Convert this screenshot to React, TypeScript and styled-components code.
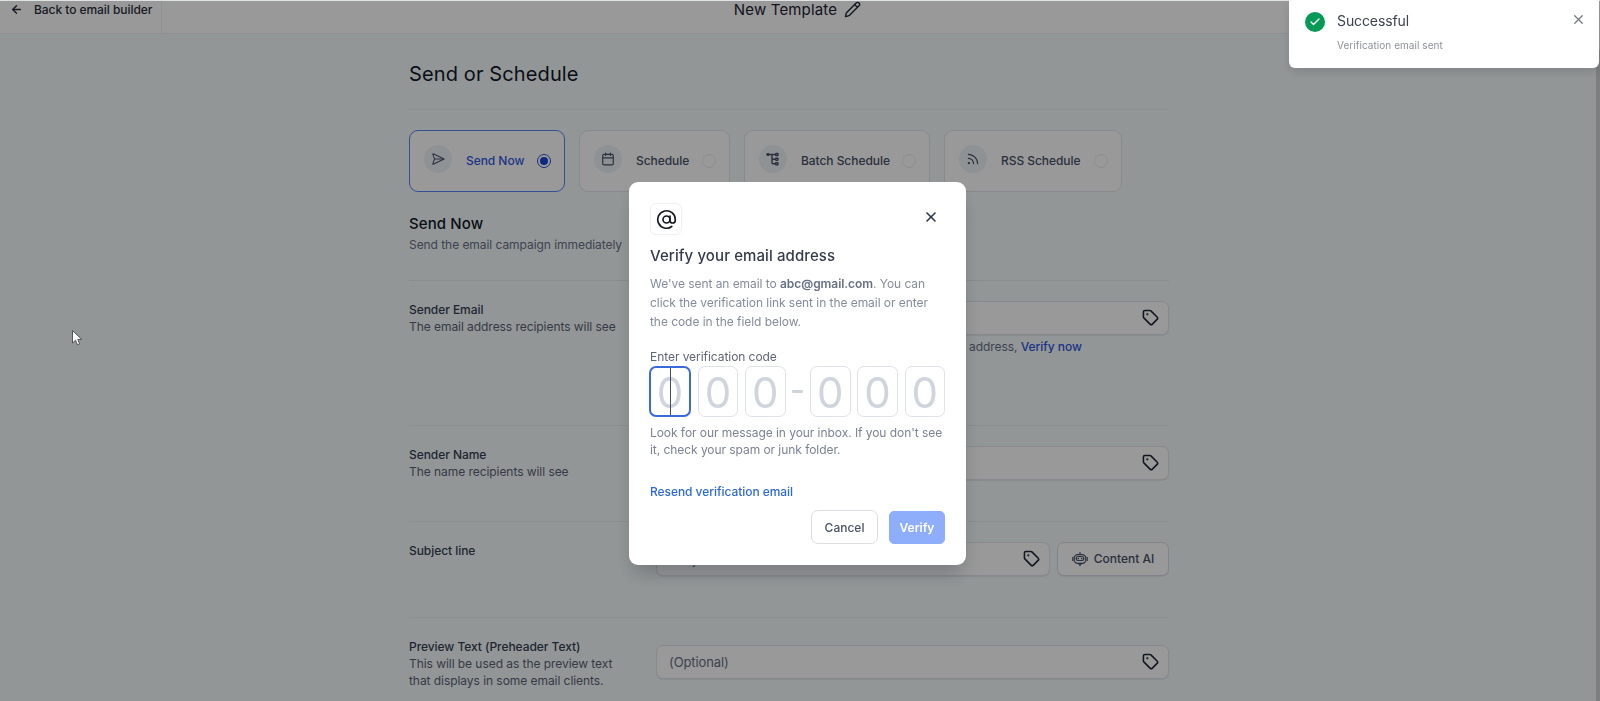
import styled, { createGlobalStyle, css } from "styled-components";
import {
  ArrowLeft,
  AtSign,
  Calendar,
  Check,
  Pencil,
  Rss,
  SendHorizontal,
  Tag,
  X,
} from "lucide-react";

const GlobalStyle = createGlobalStyle`
  * {
    box-sizing: border-box;
  }
  body {
    margin: 0;
    font-family: Inter, "Liberation Sans", sans-serif;
    font-size: 12px;
    letter-spacing: -0.055px;
    color: #344054;
    overflow: hidden;
  }
  h1, h2, h3, p {
    margin: 0;
    font-weight: 400;
  }
  button {
    font-family: inherit;
    padding: 0;
    background: none;
    border: none;
  }
`;

const Page = styled.div`
  height: 701px;
  overflow: hidden;
  background-color: #f5fbfc;
`;

const Header = styled.header`
  height: 34px;
  display: grid;
  grid-template-columns: 162px 1fr 162px;
  background-color: white;
  border-bottom: 1px solid #edeff5;
`;

const Back = styled.div`
  display: flex;
  align-items: center;
  gap: 11px;
  padding: 0 0 14px 10px;
  border-right: 1px solid #f1f2f7;
  font-weight: 500;
  white-space: nowrap;
  color: #2a303c;
`;

const TemplateName = styled.div`
  display: flex;
  align-items: center;
  justify-content: center;
  gap: 7px;
  padding: 0 5px 14px 0;
  font-size: 15px;
  letter-spacing: 0.17px;
  color: #1d2433;
`;

const Content = styled.main`
  width: 760px;
  margin-left: 409px;
`;

const Title = styled.h1`
  height: 76px;
  padding-top: 28px;
  font-size: 20px;
  line-height: 24px;
  letter-spacing: 0.12px;
  border-bottom: 1px solid #e9eef0;
  color: #101828;
`;

const Options = styled.div`
  display: flex;
  gap: 14px;
  padding-top: 20px;
`;

const Option = styled.div<{ $active?: boolean; $width: number }>`
  width: ${(props) => props.$width}px;
  height: 62px;
  display: flex;
  align-items: center;
  padding: 0 13px 2px 14px;
  background-color: white;
  border: 1px solid ${(props) => (props.$active ? "#5b83f7" : "#e2e5ea")};
  border-radius: 9px;
  color: ${(props) => (props.$active ? "#3259e4" : "#475067")};
  font-weight: 500;
`;

const OptionIcon = styled.span`
  width: 28px;
  height: 28px;
  display: flex;
  align-items: center;
  justify-content: center;
  margin-bottom: 2px;
  border-radius: 50%;
  background-color: #eff3f7;
  color: #475067;
`;

const OptionLabel = styled.span`
  padding: 1px 0 0 14px;
  white-space: nowrap;
`;

const Radio = styled.span<{ $checked?: boolean }>`
  width: 14px;
  height: 14px;
  margin: 1px 0 0 auto;
  display: flex;
  align-items: center;
  justify-content: center;
  border: 1px solid ${(props) => (props.$checked ? "#2a50d8" : "#eaecf0")};
  border-radius: 50%;
  ${(props) =>
    props.$checked &&
    css`
      &::after {
        content: "";
        width: 8px;
        height: 8px;
        border-radius: 50%;
        background-color: #1c45d4;
      }
    `}
`;

const Intro = styled.section`
  height: 89px;
  padding-top: 21px;
  border-bottom: 1px solid #e6ebed;
`;

const IntroTitle = styled.h2`
  font-size: 15px;
  font-weight: 500;
  line-height: 22px;
  letter-spacing: 0.1px;
  color: #101828;
`;

const IntroText = styled.p`
  line-height: 17px;
  margin-top: 1px;
  color: #667085;
`;

const Row = styled.section<{ $height: number }>`
  height: ${(props) => props.$height}px;
  display: grid;
  grid-template-columns: 247px 1fr;
  padding-top: 20px;
  border-bottom: 1px solid #e9edef;
`;

const RowLabel = styled.h3`
  font-size: 12px;
  line-height: 17px;
  font-weight: 500;
  color: #344054;
`;

const RowText = styled.p`
  line-height: 17px;
  white-space: nowrap;
  color: #596275;
`;

const RowFields = styled.div<{ $offset?: number }>`
  display: flex;
  gap: 7px;
  margin-top: ${(props) => props.$offset ?? 0}px;
`;

const Field = styled.div`
  flex: 1;
  height: 34px;
  display: flex;
  align-items: center;
  justify-content: space-between;
  padding: 0 9px 1px 12px;
  background-color: white;
  border: 1px solid #e1e4ea;
  border-radius: 7px;
  box-shadow: 0 1px 1px rgba(16, 24, 40, 0.08);
  font-size: 13px;
  letter-spacing: -0.1px;
  color: #667085;
  svg {
    color: #1d2433;
  }
`;

const AiButton = styled.button`
  width: 112px;
  height: 34px;
  display: flex;
  align-items: center;
  justify-content: center;
  gap: 6px;
  padding-bottom: 1px;
  background-color: white;
  border: 1px solid #dadde6;
  border-radius: 7px;
  box-shadow: 0 1px 1px rgba(16, 24, 40, 0.08);
  font-size: 12px;
  font-weight: 500;
  color: #475067;
`;

const Hint = styled.p`
  margin-top: 3px;
  padding-left: 313px;
  line-height: 17px;
  white-space: nowrap;
  color: #667085;
  a {
    color: #2f55e0;
    font-weight: 500;
  }
`;

const Overlay = styled.div`
  position: fixed;
  inset: 0;
  background-color: rgba(0, 0, 0, 0.4);
  border-top: 1px solid #dfe2e2;
`;

const Scrollbar = styled.div`
  position: fixed;
  top: 50px;
  right: 0;
  width: 4px;
  height: 651px;
  background-color: #7d7f80;
`;

const Modal = styled.div`
  position: fixed;
  top: 182px;
  left: 629px;
  width: 337px;
  height: 383px;
  padding: 21px 21px 0;
  background-color: white;
  border-radius: 9px;
  box-shadow: 0 12px 20px -4px rgba(16, 24, 40, 0.25);
`;

const ModalTop = styled.div`
  display: flex;
  justify-content: space-between;
`;

const ModalIcon = styled.div`
  width: 32px;
  height: 32px;
  display: flex;
  align-items: center;
  justify-content: center;
  border: 1px solid #eff0f3;
  border-radius: 6px;
  color: #15181f;
`;

const CloseButton = styled.button`
  width: 16px;
  height: 16px;
  margin: 6px 6px 0 0;
  color: #2b3350;
`;

const ModalTitle = styled.h2`
  margin-top: 10px;
  font-size: 15px;
  font-weight: 500;
  line-height: 22px;
  letter-spacing: 0.1px;
  color: #343a49;
`;

const ModalText = styled.p`
  margin-top: 7px;
  line-height: 19px;
  white-space: nowrap;
  color: #848b9c;
  b {
    font-weight: 600;
    color: #667085;
  }
`;

const CodeLabel = styled.p`
  margin-top: 17px;
  line-height: 17px;
  color: #5d6577;
`;

const Code = styled.div`
  display: flex;
  justify-content: space-between;
  margin: 1px 0 7px -1px;
`;

const Digit = styled.div<{ $focused?: boolean }>`
  position: relative;
  width: ${(props) => (props.$focused ? 42 : 40.5)}px;
  height: 51px;
  display: flex;
  align-items: center;
  justify-content: center;
  padding-top: 1px;
  border: 1px solid #dfe1e9;
  border-radius: 7px;
  font-size: 42px;
  line-height: 49px;
  color: #d0d5dd;
  ${(props) =>
    props.$focused &&
    css`
      border: 2px solid #3a68dd;
      &::after {
        content: "";
        position: absolute;
        top: 0;
        left: 19px;
        width: 1px;
        height: 47px;
        background-color: #454b59;
      }
    `}
`;

const Dash = styled.span`
  width: 11px;
  height: 3px;
  margin-top: 24px;
  border-radius: 1px;
  background-color: #d0d5dd;
`;

const Help = styled.p`
  line-height: 17px;
  white-space: nowrap;
  color: #7b8294;
`;

const Resend = styled.a`
  display: block;
  margin-top: 25px;
  line-height: 17px;
  font-weight: 500;
  color: #2d69d4;
`;

const Actions = styled.div`
  display: flex;
  justify-content: flex-end;
  align-items: center;
  gap: 11px;
  margin-top: 10px;
`;

const Button = styled.button<{ $primary?: boolean }>`
  width: ${(props) => (props.$primary ? 56 : 67)}px;
  height: ${(props) => (props.$primary ? 33 : 34)}px;
  border: 1px solid ${(props) => (props.$primary ? "#8eadfb" : "#dcdee4")};
  border-radius: ${(props) => (props.$primary ? 5 : 7)}px;
  background-color: ${(props) => (props.$primary ? "#8eadfb" : "white")};
  color: ${(props) => (props.$primary ? "white" : "#475067")};
  font-size: 12px;
  font-weight: ${(props) => (props.$primary ? 600 : 500)};
`;

const Toast = styled.div`
  position: fixed;
  top: 0;
  left: 1289px;
  width: 309.5px;
  height: 68px;
  display: flex;
  padding: 12px 13px 0 16px;
  background-color: white;
  border-radius: 0 0 6px 6px;
  box-shadow: 0 5px 12px rgba(0, 0, 0, 0.12);
`;

const ToastIcon = styled.span`
  width: 20px;
  height: 20px;
  display: flex;
  align-items: center;
  justify-content: center;
  border-radius: 50%;
  background-color: #079a57;
  color: white;
`;

const ToastBody = styled.div`
  flex: 1;
  padding-left: 12px;
`;

const ToastTitle = styled.p`
  font-size: 14px;
  line-height: 18px;
  letter-spacing: -0.1px;
  color: #3b414d;
`;

const ToastText = styled.p`
  margin-top: 8px;
  font-size: 10px;
  line-height: 14px;
  letter-spacing: 0.05px;
  color: #8d9199;
`;

const ToastClose = styled.span`
  height: 14px;
  color: #74777d;
`;

const Cursor = styled.svg`
  position: fixed;
  top: 329px;
  left: 71px;
`;

const BatchIcon = () => (
  <svg width="14" height="14" viewBox="0 0 14 14" fill="none" stroke="currentColor" strokeWidth="1.4">
    <path d="M3 2.5h6.5M6 2.5v8.3a1 1 0 0 0 1 1h2.5M6 7.2h3.5" />
    <rect x="1" y="1.7" width="1.8" height="1.6" rx="0.6" />
    <rect x="9.6" y="1.5" width="2.4" height="2" rx="0.6" />
    <rect x="9.6" y="6.2" width="2.4" height="2" rx="0.6" />
    <rect x="9.6" y="10.8" width="2.4" height="2" rx="0.6" />
  </svg>
);

const RobotIcon = () => (
  <svg width="16" height="16" viewBox="0 0 16 16" fill="none" stroke="currentColor" strokeWidth="1.2">
    <path d="M8 1.4v2M.8 6.4v3.2M15.2 6.4v3.2M6.6 12.4 8 14.2l1.4-1.8" strokeLinecap="round" />
    <rect x="2.2" y="3.6" width="11.6" height="8.8" rx="3.6" />
    <rect x="4.2" y="5.5" width="7.6" height="4" rx="1.9" />
    <path d="M6.4 6.8v1.4M9.6 6.8v1.4" strokeWidth="1.4" />
  </svg>
);

const options = [
  { label: "Send Now", width: 156, icon: <SendHorizontal size={14} strokeWidth={1.8} />, active: true },
  { label: "Schedule", width: 151, icon: <Calendar size={14} strokeWidth={2} /> },
  { label: "Batch Schedule", width: 186, icon: <BatchIcon /> },
  { label: "RSS Schedule", width: 178, icon: <Rss size={14} strokeWidth={2} /> },
];

const TagIcon = () => <Tag size={17} strokeWidth={2.2} />;

function App() {
  return (
    <>
      <GlobalStyle />
      <Page>
        <Header>
          <Back>
            <ArrowLeft size={13} strokeWidth={2.6} />
            Back to email builder
          </Back>
          <TemplateName>
            New Template
            <Pencil size={17} strokeWidth={1.9} />
          </TemplateName>
        </Header>
        <Content>
          <Title>Send or Schedule</Title>
          <Options>
            {options.map((option) => (
              <Option key={option.label} $active={option.active} $width={option.width}>
                <OptionIcon>{option.icon}</OptionIcon>
                <OptionLabel>{option.label}</OptionLabel>
                <Radio $checked={option.active} />
              </Option>
            ))}
          </Options>
          <Intro>
            <IntroTitle>Send Now</IntroTitle>
            <IntroText>Send the email campaign immediately</IntroText>
          </Intro>
          <Row $height={145}>
            <div>
              <RowLabel>Sender Email</RowLabel>
              <RowText>The email address recipients will see</RowText>
            </div>
            <div>
              <RowFields>
                <Field>
                  <span />
                  <TagIcon />
                </Field>
              </RowFields>
              <Hint>
                address, <a>Verify now</a>
              </Hint>
            </div>
          </Row>
          <Row $height={96}>
            <div>
              <RowLabel>Sender Name</RowLabel>
              <RowText>The name recipients will see</RowText>
            </div>
            <RowFields>
              <Field>
                <span />
                <TagIcon />
              </Field>
            </RowFields>
          </Row>
          <Row $height={96}>
            <RowLabel>Subject line</RowLabel>
            <RowFields>
              <Field>
                Subject
                <TagIcon />
              </Field>
              <AiButton>
                <RobotIcon />
                Content AI
              </AiButton>
            </RowFields>
          </Row>
          <Row $height={110}>
            <div>
              <RowLabel>Preview Text (Preheader Text)</RowLabel>
              <RowText>
                This will be used as the preview text
                <br />
                that displays in some email clients.
              </RowText>
            </div>
            <RowFields $offset={7}>
              <Field>
                (Optional)
                <TagIcon />
              </Field>
            </RowFields>
          </Row>
        </Content>
      </Page>
      <Overlay />
      <Scrollbar />
      <Modal>
        <ModalTop>
          <ModalIcon>
            <AtSign size={21} strokeWidth={1.9} />
          </ModalIcon>
          <CloseButton>
            <X size={16} strokeWidth={2.4} />
          </CloseButton>
        </ModalTop>
        <ModalTitle>Verify your email address</ModalTitle>
        <ModalText>
          We've sent an email to <b>abc@gmail.com</b>. You can
          <br />
          click the verification link sent in the email or enter
          <br />
          the code in the field below.
        </ModalText>
        <CodeLabel>Enter verification code</CodeLabel>
        <Code>
          <Digit $focused>0</Digit>
          <Digit>0</Digit>
          <Digit>0</Digit>
          <Dash />
          <Digit>0</Digit>
          <Digit>0</Digit>
          <Digit>0</Digit>
        </Code>
        <Help>
          Look for our message in your inbox. If you don't see
          <br />
          it, check your spam or junk folder.
        </Help>
        <Resend>Resend verification email</Resend>
        <Actions>
          <Button>Cancel</Button>
          <Button $primary>Verify</Button>
        </Actions>
      </Modal>
      <Toast>
        <ToastIcon>
          <Check size={12} strokeWidth={2.6} />
        </ToastIcon>
        <ToastBody>
          <ToastTitle>Successful</ToastTitle>
          <ToastText>Verification email sent</ToastText>
        </ToastBody>
        <ToastClose>
          <X size={15} strokeWidth={2} />
        </ToastClose>
      </Toast>
      <Cursor width="12" height="18" viewBox="0 0 12 18">
        <path d="M1.5 1.5v12.5l3-2.8 2 4.6 2.2-1-2-4.4h4z" fill="white" stroke="#44484c" strokeWidth="0.9" />
      </Cursor>
    </>
  );
}

export default App;
